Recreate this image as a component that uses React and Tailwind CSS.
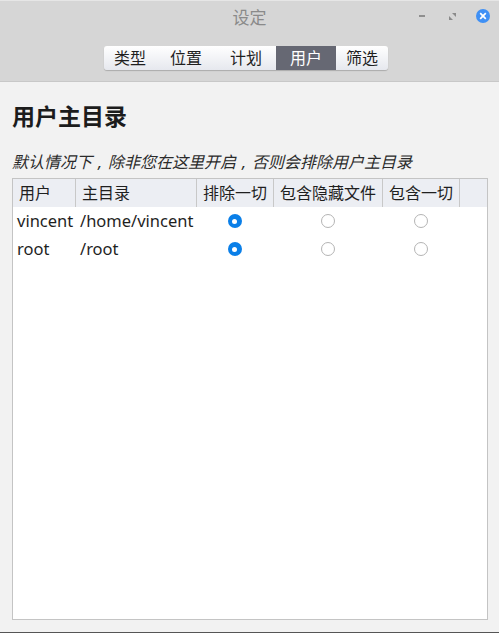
const font = { fontFamily: '"Noto Sans", "Noto Sans CJK SC", sans-serif' };

const tabs = ["类型", "位置", "计划", "用户", "筛选"];
const columns = [
  { title: "用户", cls: "w-[63px]" },
  { title: "主目录", cls: "w-[121px]" },
  { title: "排除一切", cls: "w-[77px]" },
  { title: "包含隐藏文件", cls: "w-[109px]" },
  { title: "包含一切", cls: "w-[77px]" },
];
const users = [
  { name: "vincent", home: "/home/vincent" },
  { name: "root", home: "/root" },
];

function Radio({ checked }) {
  if (checked) {
    return (
      <span className="flex h-[14px] w-[14px] items-center justify-center rounded-full bg-[#0a7fe8]">
        <span className="h-[5px] w-[5px] rounded-full bg-white" />
      </span>
    );
  }
  return <span className="h-[14px] w-[14px] rounded-full border border-[#b4b4b4] bg-white" />;
}

function Comma() {
  return <span className="inline-block w-[16px] text-center">,</span>;
}

export default function App() {
  return (
    <div className="flex h-[633px] w-[499px] flex-col overflow-hidden border-b border-[#555555] bg-[#f2f2f2] text-[#1f1f1f]" style={font}>
      {/* Title bar */}
      <div className="relative flex h-[33px] shrink-0 items-center justify-center border-t border-[#e6e6e6] bg-[#d6d6d6]">
        <span className="text-[17px] leading-none text-[#8a8a8a]">设定</span>
        <div className="absolute right-[9px] top-[8px] flex items-center">
          <span className="mr-[24px] h-[2px] w-[6px] bg-[#8f8f8f]" />
          <svg className="mr-[20px]" width="7" height="7" viewBox="0 0 7 7">
            <path d="M3 0h4v4z M0 3v4h4z" fill="#8a8a8a" />
          </svg>
          <span className="flex h-[14px] w-[14px] items-center justify-center rounded-full bg-[#3f90f5]">
            <svg width="8" height="8" viewBox="0 0 8 8">
              <path d="M1.2 1.2l5.6 5.6M6.8 1.2l-5.6 5.6" stroke="#fff" strokeWidth="1.7" />
            </svg>
          </span>
        </div>
      </div>

      {/* Toolbar */}
      <div className="flex h-[49px] shrink-0 justify-center border-b border-[#c8c8c8] bg-[#d6d6d6] pr-[7px] pt-[13px]">
        <div className="flex h-[24px] overflow-hidden rounded-[3px] bg-gradient-to-b from-white to-[#e6e8ee] shadow-[0_1px_1px_rgba(0,0,0,0.2)]">
          {tabs.map((t) => (
            <div
              key={t}
              className={`flex items-center justify-center text-base leading-none ${
                t === "用户" ? "w-[60px] bg-[#666873] text-white" : t === "筛选" || t === "类型" ? "w-[52px]" : "w-[60px]"
              }`}
            >
              {t}
            </div>
          ))}
        </div>
      </div>

      {/* Content */}
      <div className="flex min-h-0 flex-1 flex-col pb-[12px] pl-[12px] pr-[11px]">
        <h1 className="mt-[19px] text-[23px] font-bold leading-[30px] text-[#1c1c1c]">用户主目录</h1>
        <p className="mt-[20px] text-base italic leading-[22px] text-[#2b2b2b]">
          默认情况下<Comma />除非您在这里开启<Comma />否则会排除用户主目录
        </p>

        <div className="mt-[5px] min-h-0 flex-1 border border-[#c4c4c4] bg-white">
          <div className="flex h-[28px] bg-[#eceef3]">
            {columns.map((c) => (
              <div key={c.title} className={`${c.cls} flex items-center border-r border-[#c8c8c8] pl-[6px] text-base leading-none`}>
                {c.title}
              </div>
            ))}
          </div>
          {users.map((u) => (
            <div key={u.name} className="flex h-[28px] items-center text-[16.5px]">
              <div className="w-[63px] pl-[4px]">{u.name}</div>
              <div className="w-[121px] pl-[4px]">{u.home}</div>
              <div className="flex w-[77px] justify-center pr-[2px]"><Radio checked /></div>
              <div className="flex w-[109px] justify-center pr-[2px]"><Radio /></div>
              <div className="flex w-[77px] justify-center pr-[2px]"><Radio /></div>
            </div>
          ))}
        </div>
      </div>
    </div>
  );
}
